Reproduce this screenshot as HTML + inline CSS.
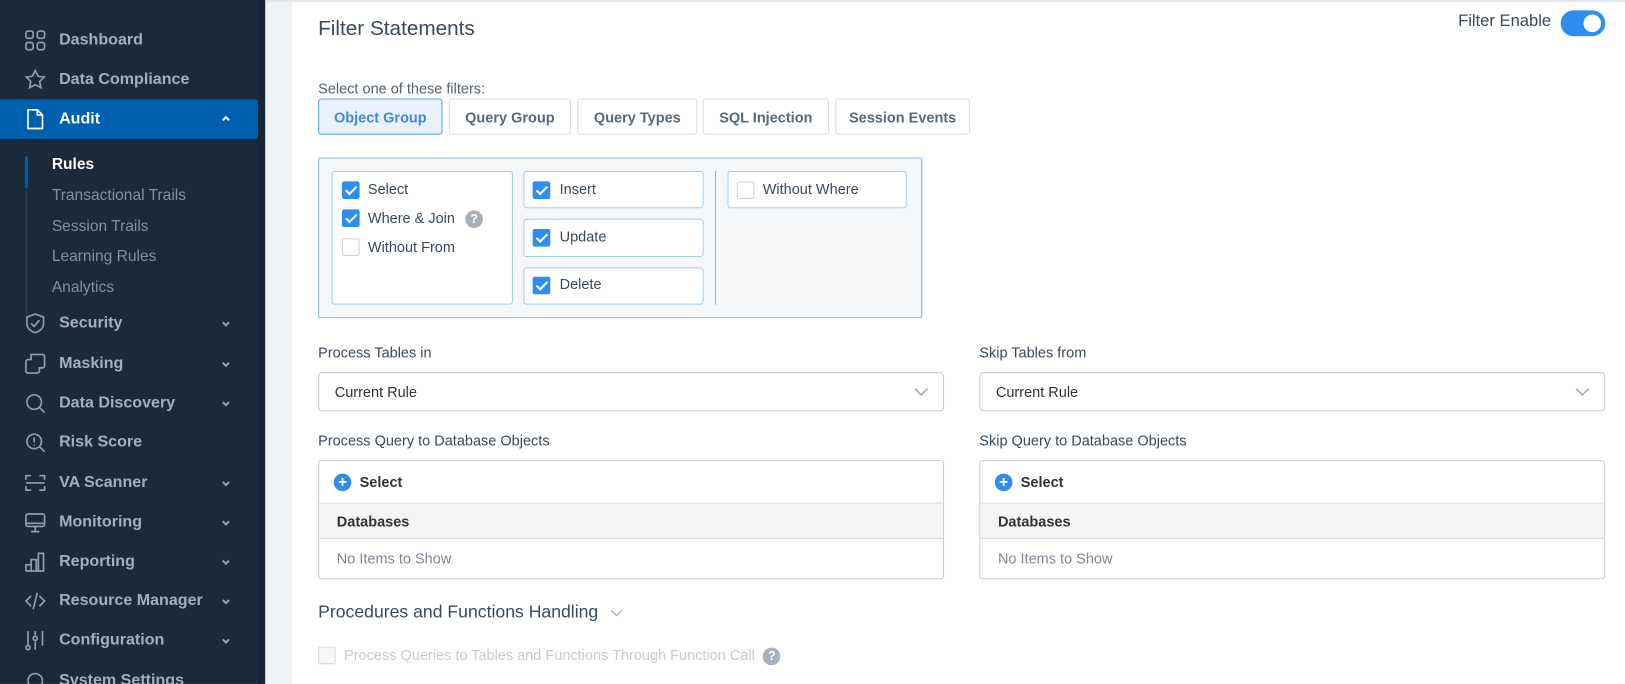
<!DOCTYPE html>
<html><head><meta charset="utf-8"><style>
*{box-sizing:border-box;margin:0;padding:0}
body{width:1625px;height:677px;overflow:hidden;font-family:"Liberation Sans",sans-serif;background:#fff;position:relative;color:#333}
#w{position:absolute;left:0;top:0;width:1568px;height:660px;transform:scale(1.0363);transform-origin:0 0}
.sb{position:absolute;left:0;top:0;width:256px;height:660px;background:#1b2a3a;overflow:hidden}
.sb .edge{position:absolute;right:0;top:0;width:7px;height:660px;background:#172636}
.it{position:absolute;left:0;width:249px;height:38px;display:flex;align-items:center;color:#9fb0c0;font-size:15.5px;font-weight:bold}
.it svg{position:absolute;left:23px;width:22px;height:22px;fill:none;stroke:#8fa0b0;stroke-width:1.6}
.it span{position:absolute;left:57px}
.it .ch{position:absolute;left:213px;width:10px;height:10px;stroke:#8fa0b0}
.it.act{background:#0060b0;color:#fff;border-radius:0 3px 3px 0}
.it.act svg{stroke:#fff}
.sub{position:absolute;left:50px;font-size:15px;color:#7f91a3}
.gray{position:absolute;left:256px;top:0;width:26px;height:660px;background:#f0f3f6}
.topline{position:absolute;left:256px;top:0;right:0;height:2px;background:#e3e7eb}
.t{position:absolute;white-space:nowrap}
.btn{position:absolute;top:95px;height:35px;border:1px solid #d9dee3;border-radius:3px;font-size:14px;font-weight:bold;color:#5a6878;display:flex;align-items:center;justify-content:center}
.cb{position:absolute;width:17px;height:17px;border-radius:2px;background:#2d8ef0}
.cb::after{content:"";position:absolute;left:6px;top:2px;width:4px;height:9px;border:solid #fff;border-width:0 2px 2px 0;transform:rotate(45deg)}
.cb.off{background:#fff;border:1px solid #ccd3da}
.cb.off::after{display:none}
.box{position:absolute;background:#fff;border:1px solid #a9cdee;border-radius:3px}
.lbl{font-size:14px;color:#3c4a58}
.sel{position:absolute;top:359px;height:38px;border:1px solid #ccc;border-radius:4px;font-size:14px;color:#333;padding-left:15px;display:flex;align-items:center}
.tbl{position:absolute;top:444px;height:115px;border:1px solid #c6ccd2;border-radius:3px}
.tbl .r1{height:41px;display:flex;align-items:center;padding-left:14px;font-size:14px;font-weight:bold;color:#333;border-bottom:1px solid #d4d9de}
.tbl .r2{height:34px;background:#f4f5f6;display:flex;align-items:center;padding-left:17px;font-size:14px;font-weight:bold;color:#333;border-bottom:1px solid #d4d9de}
.tbl .r3{height:38px;display:flex;align-items:center;padding-left:17px;font-size:14px;color:#7d8893}
.plus{width:17px;height:17px;border-radius:50%;background:#2d8ef0;color:#fff;font-size:15px;line-height:17px;text-align:center;margin-right:8px;font-weight:bold}
.q{display:inline-block;width:17px;height:17px;border-radius:50%;background:#a8b1ba;color:#fff;font-size:12px;line-height:17px;text-align:center;font-weight:bold}
</style></head><body><div id="w">
<div class="sb"><div class="edge"></div>
<div class="it" style="top:20px"><svg viewBox="0 0 22 22"><rect x="2" y="2" width="7" height="7" rx="2"/><rect x="13" y="2" width="7" height="7" rx="2"/><rect x="2" y="13" width="7" height="7" rx="2"/><rect x="13" y="13" width="7" height="7" rx="2"/></svg><span>Dashboard</span></div>
<div class="it" style="top:58px"><svg viewBox="0 0 22 22"><path d="M11 2l2.7 5.6 6 .8-4.4 4.2 1.1 6L11 15.8 5.6 18.6l1.1-6L2.3 8.4l6-.8z"/></svg><span>Data Compliance</span></div>
<div class="it act" style="top:96px"><svg viewBox="0 0 22 22"><path d="M4 2h9l5 5v13H4z M13 2v5h5"/></svg><span>Audit</span><svg class="ch" viewBox="0 0 10 10" style="left:213px"><path d="M2 6l3-3 3 3" stroke-width="2"/></svg></div>
<div style="position:absolute;left:25px;top:151px;width:1px;height:154px;background:#2b3d50"></div>
<div style="position:absolute;left:24px;top:151px;width:3px;height:30px;background:#0060b0"></div>
<div class="sub" style="top:150px;color:#fff;font-weight:bold">Rules</div>
<div class="sub" style="top:180px">Transactional Trails</div>
<div class="sub" style="top:210px">Session Trails</div>
<div class="sub" style="top:239px">Learning Rules</div>
<div class="sub" style="top:269px">Analytics</div>
<div class="it" style="top:293px"><svg viewBox="0 0 22 22"><path d="M11 2l8 3v6c0 5-4 8-8 9-4-1-8-4-8-9V5z M7 11l3 3 5-6"/></svg><span>Security</span><svg class="ch" viewBox="0 0 10 10"><path d="M2 4l3 3 3-3" stroke-width="2"/></svg></div>
<div class="it" style="top:332px"><svg viewBox="0 0 22 22"><path d="M7 2h11a2 2 0 0 1 2 2v9a2 2 0 0 1-2 2h-3v3a2 2 0 0 1-2 2H4a2 2 0 0 1-2-2V9a2 2 0 0 1 2-2h3z"/></svg><span>Masking</span><svg class="ch" viewBox="0 0 10 10"><path d="M2 4l3 3 3-3" stroke-width="2"/></svg></div>
<div class="it" style="top:370px"><svg viewBox="0 0 22 22"><circle cx="10" cy="10" r="7"/><path d="M15 15l5 5"/></svg><span>Data Discovery</span><svg class="ch" viewBox="0 0 10 10"><path d="M2 4l3 3 3-3" stroke-width="2"/></svg></div>
<div class="it" style="top:408px"><svg viewBox="0 0 22 22"><circle cx="10" cy="10" r="7"/><path d="M15 15l5 5 M10 6v5 M10 13v1"/></svg><span>Risk Score</span></div>
<div class="it" style="top:447px"><svg viewBox="0 0 22 22"><path d="M2 8V4h5 M15 4h5v4 M2 14v4h5 M15 18h5v-4 M2 11h18"/></svg><span>VA Scanner</span><svg class="ch" viewBox="0 0 10 10"><path d="M2 4l3 3 3-3" stroke-width="2"/></svg></div>
<div class="it" style="top:485px"><svg viewBox="0 0 22 22"><rect x="2" y="3" width="18" height="12" rx="2"/><path d="M2 12h18 M11 15v4 M7 20h8"/></svg><span>Monitoring</span><svg class="ch" viewBox="0 0 10 10"><path d="M2 4l3 3 3-3" stroke-width="2"/></svg></div>
<div class="it" style="top:523px"><svg viewBox="0 0 22 22"><path d="M2 20V14h5v6 M7 20V9h5v11 M14 20V3h5v17H2"/></svg><span>Reporting</span><svg class="ch" viewBox="0 0 10 10"><path d="M2 4l3 3 3-3" stroke-width="2"/></svg></div>
<div class="it" style="top:561px"><svg viewBox="0 0 22 22"><path d="M7 6l-5 5 5 5 M15 6l5 5-5 5 M13 3l-4 16"/></svg><span>Resource Manager</span><svg class="ch" viewBox="0 0 10 10"><path d="M2 4l3 3 3-3" stroke-width="2"/></svg></div>
<div class="it" style="top:599px"><svg viewBox="0 0 22 22"><path d="M4 2v14 M11 2v4 M11 12v8 M18 2v14"/><circle cx="4" cy="18" r="2"/><circle cx="11" cy="9" r="2"/></svg><span>Configuration</span><svg class="ch" viewBox="0 0 10 10"><path d="M2 4l3 3 3-3" stroke-width="2"/></svg></div>
<div class="it" style="top:638px"><svg viewBox="0 0 22 22"><circle cx="11" cy="11" r="7"/></svg><span>System Settings</span></div>
</div>
<div class="gray"></div><div class="topline"></div>

<div class="t" style="left:307px;top:17px;font-size:20px;color:#3c4a58">Filter Statements</div>
<div class="t" style="left:1407px;top:12px;font-size:16px;color:#3c4a58">Filter Enable</div>
<div style="position:absolute;left:1506px;top:10px;width:43px;height:25px;border-radius:13px;background:#2d8ef0"><div style="position:absolute;right:4px;top:4px;width:17px;height:17px;border-radius:50%;background:#fff"></div></div>

<div class="t lbl" style="left:307px;top:77px;color:#56626e">Select one of these filters:</div>
<div class="btn" style="left:307px;width:120px;background:#e8f2fd;border-color:#5aa3e8;color:#3d8be0">Object Group</div>
<div class="btn" style="left:433px;width:118px">Query Group</div>
<div class="btn" style="left:557px;width:116px">Query Types</div>
<div class="btn" style="left:678px;width:122px">SQL Injection</div>
<div class="btn" style="left:806px;width:130px">Session Events</div>

<div style="position:absolute;left:307px;top:152px;width:583px;height:155px;background:#f5f7f9;border:1px solid #7eb6ea;border-radius:2px"></div>
<div class="box" style="left:320px;top:165px;width:175px;height:129px"></div>
<div class="cb" style="left:330px;top:175px"></div><div class="t lbl" style="left:355px;top:174px">Select</div>
<div class="cb" style="left:330px;top:202px"></div><div class="t lbl" style="left:355px;top:202px">Where &amp; Join <span class="q" style="margin-left:6px">?</span></div>
<div class="cb off" style="left:330px;top:230px"></div><div class="t lbl" style="left:355px;top:230px">Without From</div>
<div class="box" style="left:505px;top:165px;width:174px;height:36px"></div>
<div class="cb" style="left:514px;top:175px"></div><div class="t lbl" style="left:540px;top:174px">Insert</div>
<div class="box" style="left:505px;top:211px;width:174px;height:37px"></div>
<div class="cb" style="left:514px;top:221px"></div><div class="t lbl" style="left:540px;top:220px">Update</div>
<div class="box" style="left:505px;top:258px;width:174px;height:36px"></div>
<div class="cb" style="left:514px;top:267px"></div><div class="t lbl" style="left:540px;top:266px">Delete</div>
<div style="position:absolute;left:690px;top:165px;width:1px;height:129px;background:#7eb6ea"></div>
<div class="box" style="left:702px;top:165px;width:173px;height:36px"></div>
<div class="cb off" style="left:711px;top:175px"></div><div class="t lbl" style="left:736px;top:174px">Without Where</div>

<div class="t lbl" style="left:307px;top:332px">Process Tables in</div>
<div class="t lbl" style="left:945px;top:332px">Skip Tables from</div>
<div class="sel" style="left:307px;width:604px">Current Rule<svg style="position:absolute;right:14px;top:14px" width="14" height="9" viewBox="0 0 14 9"><path d="M1 1l6 6 6-6" fill="none" stroke="#aaa" stroke-width="1.6"/></svg></div>
<div class="sel" style="left:945px;width:604px">Current Rule<svg style="position:absolute;right:14px;top:14px" width="14" height="9" viewBox="0 0 14 9"><path d="M1 1l6 6 6-6" fill="none" stroke="#aaa" stroke-width="1.6"/></svg></div>

<div class="t lbl" style="left:307px;top:417px">Process Query to Database Objects</div>
<div class="t lbl" style="left:945px;top:417px">Skip Query to Database Objects</div>
<div class="tbl" style="left:307px;width:604px"><div class="r1"><div class="plus">+</div>Select</div><div class="r2">Databases</div><div class="r3">No Items to Show</div></div>
<div class="tbl" style="left:945px;width:604px"><div class="r1"><div class="plus">+</div>Select</div><div class="r2">Databases</div><div class="r3">No Items to Show</div></div>

<div class="t" style="left:307px;top:581px;font-size:17px;color:#3c4a58">Procedures and Functions Handling<svg style="margin-left:12px;vertical-align:middle" width="12" height="8" viewBox="0 0 12 8"><path d="M1 1l5 5 5-5" fill="none" stroke="#aab" stroke-width="1.3"/></svg></div>
<div style="position:absolute;left:307px;top:624px;width:17px;height:17px;border:1px solid #d6dce2;border-radius:2px;background:#f5f7f9"></div>
<div class="t" style="left:332px;top:624px;font-size:14px;color:#c3cbd3">Process Queries to Tables and Functions Through Function Call <span class="q" style="margin-left:4px">?</span></div>
</div></body></html>
